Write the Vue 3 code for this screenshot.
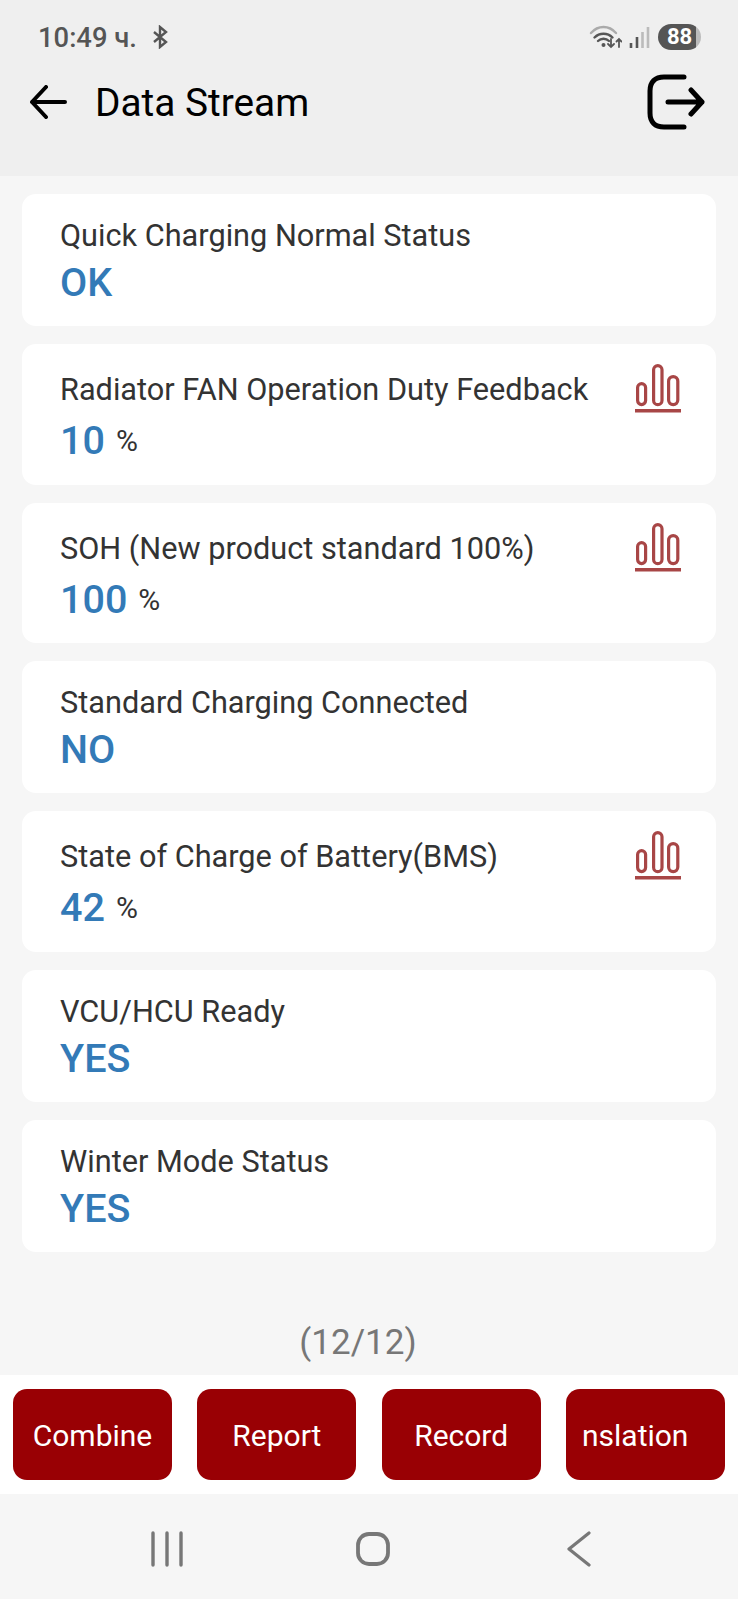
<template>
  <div class="page">
    <header class="top">
      <div class="status">
        <div class="status-left">
          <span class="time">10:49 ч.</span>
          <svg class="bt" width="16" height="24" viewBox="0 0 16 24" fill="none" stroke="#555" stroke-width="2.4">
            <path d="M2 7l12 10-6 5V2l6 5L2 17" />
          </svg>
        </div>
        <div class="status-right">
          <svg width="34" height="24" viewBox="0 0 34 24" fill="none" stroke-linecap="round">
            <path d="M3 8c7-8 18-8 25 0" stroke="#aaa" stroke-width="2.4" />
            <path d="M6.5 12.5c5-5 13-5 18 0" stroke="#555" stroke-width="2.4" />
            <path d="M10 16c3-3 8-3 11 0" stroke="#555" stroke-width="2.4" />
            <circle cx="15.5" cy="20" r="2" fill="#555" />
            <path d="M23 14v8m-3-3l3 3 3-3M31 22v-8m-2.5 2.5l2.5-2.5 2.5 2.5" stroke="#555" stroke-width="1.8" />
          </svg>
          <svg class="signal" width="22" height="24" viewBox="0 0 22 24" fill="none" stroke-width="2.6">
            <path d="M3 23v-5M9 23V12" stroke="#555" />
            <path d="M14.5 23V7M20 23V2" stroke="#bbb" />
          </svg>
          <div class="battery"><span>88</span></div>
        </div>
      </div>
      <div class="toolbar">
        <svg class="back" width="38" height="34" viewBox="0 0 38 34" fill="none" stroke="#000" stroke-width="4" stroke-linecap="round" stroke-linejoin="round">
          <path d="M36 17H3M17 2L3 17l14 15" />
        </svg>
        <h1>Data Stream</h1>
        <svg class="exit" width="58" height="56" viewBox="0 0 58 56" fill="none" stroke="#000" stroke-width="5" stroke-linecap="round" stroke-linejoin="round">
          <path d="M37 3H17C8 3 3 8 3 17v22c0 9 5 14 14 14h20" />
          <path d="M21 28h34M44 16l11 12-11 12" />
        </svg>
      </div>
    </header>

    <main class="list">
      <div v-for="item in items" :key="item.label" :class="['card', { 'card--unit': item.unit }]">
        <div class="card-text">
          <div class="label">{{ item.label }}</div>
          <div class="value">
            {{ item.value }}<span v-if="item.unit" class="unit">{{ item.unit }}</span>
          </div>
        </div>
        <svg v-if="item.unit" class="chart" width="48" height="50" viewBox="0 0 48 50" fill="none" stroke="#a84646" stroke-width="3.2">
          <rect x="3.6" y="20.6" width="8" height="21" rx="4" />
          <rect x="19.6" y="2.6" width="8.4" height="39" rx="4.2" />
          <rect x="34.6" y="13.6" width="9.2" height="28" rx="4.6" />
          <path d="M1 47.7h46" stroke-width="3.6" />
        </svg>
      </div>
    </main>

    <div class="pager">(12/12)</div>

    <footer class="actions">
      <button v-for="b in buttons" :key="b" :class="['action', { 'action--clip': b === 'nslation' }]">{{ b }}</button>
    </footer>

    <nav class="nav">
      <svg width="32" height="36" viewBox="0 0 32 36" fill="none" stroke="#777" stroke-width="3.4" stroke-linecap="round">
        <path d="M2 2v32M16 2v32M30 2v32" />
      </svg>
      <svg class="nav-home" width="34" height="36" viewBox="0 0 34 36" fill="none" stroke="#777" stroke-width="3.8">
        <rect x="2" y="3" width="30" height="30" rx="11" />
      </svg>
      <svg width="24" height="36" viewBox="0 0 24 36" fill="none" stroke="#777" stroke-width="3.2" stroke-linecap="round" stroke-linejoin="round">
        <path d="M22 2L2 18l20 16" />
      </svg>
    </nav>
  </div>
</template>

<script setup>
const items = [
  { label: 'Quick Charging Normal Status', value: 'OK' },
  { label: 'Radiator FAN Operation Duty Feedback', value: '10', unit: '%' },
  { label: 'SOH (New product standard 100%)', value: '100', unit: '%' },
  { label: 'Standard Charging Connected', value: 'NO' },
  { label: 'State of Charge of Battery(BMS)', value: '42', unit: '%' },
  { label: 'VCU/HCU Ready', value: 'YES' },
  { label: 'Winter Mode Status', value: 'YES' },
]

const buttons = ['Combine', 'Report', 'Record', 'nslation']
</script>

<style>
html,
body {
  margin: 0;
  background: #f6f6f6;
}
</style>

<style scoped>
.page {
  width: 738px;
  height: 1599px;
  display: flex;
  flex-direction: column;
  background: #f6f6f6;
  font-family: Roboto, "Liberation Sans", sans-serif;
  overflow: hidden;
}

.top {
  height: 176px;
  background: #efefef;
  flex: none;
}
.status {
  display: flex;
  justify-content: space-between;
  align-items: center;
  height: 26px;
  padding: 24px 37px 0 38px;
}
.status-left,
.status-right {
  display: flex;
  align-items: center;
}
.time {
  margin-top: 2px;
  font-size: 27.4px;
  font-weight: 500;
  color: #555;
}
.bt {
  margin-left: 15px;
}
.signal {
  margin-left: 6px;
}
.battery {
  margin-left: 8px;
  width: 43px;
  height: 26px;
  border-radius: 13px;
  background: linear-gradient(to right, #555 88%, #bbb 88%);
  color: #fff;
  font-size: 22px;
  font-weight: 700;
  line-height: 26px;
  text-align: center;
}
.toolbar {
  display: flex;
  align-items: center;
  height: 56px;
  padding: 24px 33px 0 29px;
}
.toolbar h1 {
  margin: 0 0 0 28px;
  flex: 1;
  font-size: 38.8px;
  font-weight: 400;
  color: #000;
}

.list {
  flex: 1;
  display: flex;
  flex-direction: column;
  gap: 18px;
  padding: 18px 22px 0;
}
.card {
  height: 132px;
  flex: none;
  box-sizing: border-box;
  padding: 22px 34px 0 38px;
  display: flex;
  justify-content: space-between;
  align-items: flex-start;
  background: #fff;
  border-radius: 14px;
}
.card--unit {
  height: 140.5px;
  padding-top: 26px;
}
.label {
  font-size: 30.7px;
  line-height: 40px;
  color: #333;
}
.value {
  margin-top: 2px;
  font-size: 39.5px;
  line-height: 50px;
  font-weight: 500;
  color: #337ab7;
}
.card--unit .value {
  margin-top: 6px;
}
.unit {
  margin-left: 11px;
  font-size: 30px;
  font-weight: 400;
  color: #333;
  vertical-align: 3px;
}
.chart {
  margin-top: -7px;
}

.pager {
  flex: none;
  height: 56px;
  margin-top: 60px;
  padding-right: 22px;
  text-align: center;
  font-size: 35px;
  line-height: 48px;
  color: #777;
}

.actions {
  flex: none;
  height: 119px;
  box-sizing: border-box;
  padding: 14px 13px;
  display: flex;
  justify-content: space-between;
  background: #fff;
}
.action {
  width: 159px;
  height: 91px;
  padding: 2px 0 0;
  border: none;
  border-radius: 14px;
  background: #990004;
  color: #fff;
  font-family: inherit;
  font-size: 30px;
}
.action--clip {
  text-align: left;
  padding-left: 16px;
}

.nav {
  flex: none;
  height: 105px;
  display: flex;
  align-items: center;
  box-sizing: border-box;
  padding: 5px 0 0 151px;
}
.nav-home {
  margin: 0 177px 0 173px;
}
</style>
